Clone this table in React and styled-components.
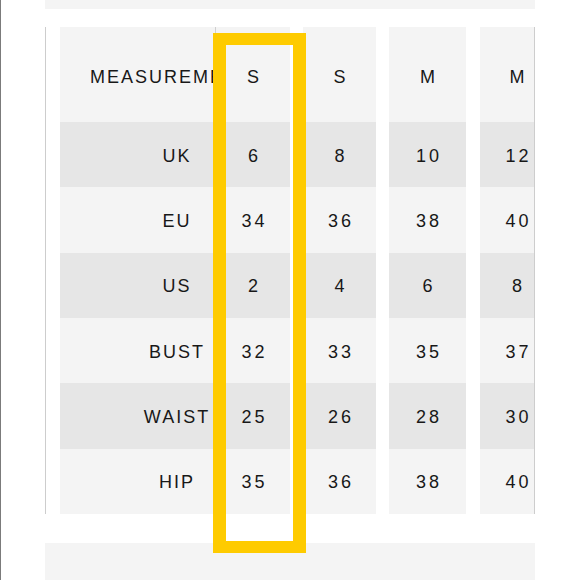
import React from "react";
import styled, { createGlobalStyle } from "styled-components";

const GlobalStyle = createGlobalStyle`
  html, body { margin: 0; padding: 0; background: #ffffff; }
  body { font-family: "Liberation Sans", Arial, Helvetica, sans-serif; }
`;

const Page = styled.div`
  position: relative;
  box-sizing: border-box;
  height: 580px;
  padding-left: 44px;
  border-left: 1px solid #7b7b7b;
  overflow: hidden;
`;

const Sheet = styled.div`
  width: 490px;
  display: flex;
  flex-direction: column;
`;

const Band = styled.div`
  height: ${(p) => p.$h}px;
  margin-top: ${(p) => p.$mt || 0}px;
  background: #f4f4f4;
  flex-shrink: 0;
`;

const TableFrame = styled.div`
  margin-top: 18px;
  box-sizing: border-box;
  height: 487px;
  padding-left: 14px;
  border-left: 1px solid #cdcdcd;
  border-right: 1px solid #cdcdcd;
  overflow: hidden;
  display: flex;
  flex-direction: column;
`;

const Row = styled.div`
  display: flex;
  flex-shrink: 0;
  height: ${(p) => (p.$header ? 95 : 65.33)}px;
  color: #181818;
  font-size: 18px;
  letter-spacing: 2px;
`;

const LabelCell = styled.div`
  box-sizing: border-box;
  flex: 0 0 156px;
  padding-top: ${(p) => (p.$header ? 6 : 3)}px;
  border-right: 1px solid #cfcfcf;
  background: ${(p) => p.$bg};
  display: flex;
  align-items: center;
  justify-content: flex-start;
  overflow: hidden;
  white-space: nowrap;
`;

const LabelText = styled.span`
  flex: 0 0 232px;
  padding-left: 2px;
  padding-right: ${(p) => (p.$header ? 12 : 0)}px;
  box-sizing: border-box;
  text-align: center;
`;

const SizeCell = styled.div`
  box-sizing: border-box;
  flex: 0 0 ${(p) => p.$w}px;
  margin-left: ${(p) => p.$gap}px;
  padding: ${(p) => (p.$header ? 6 : 3)}px 0 0 ${(p) => (p.$header ? 2 : 2.8)}px;
  letter-spacing: ${(p) => (p.$header ? 2 : 2.8)}px;
  background: ${(p) => p.$bg};
  display: flex;
  align-items: center;
  justify-content: center;
  white-space: nowrap;
`;

const Highlight = styled.div`
  position: absolute;
  left: 212px;
  top: 33px;
  width: 93px;
  height: 520px;
  box-sizing: border-box;
  border: 12px solid #fecb00;
  border-left-width: 13px;
  border-right-width: 13px;
  pointer-events: none;
`;

const columns = [
  { w: 74, gap: 0 },
  { w: 73, gap: 13 },
  { w: 77, gap: 13 },
  { w: 74, gap: 14 },
];

const rows = [
  { label: "MEASUREMENT", values: ["S", "S", "M", "M"], header: true },
  { label: "UK", values: ["6", "8", "10", "12"] },
  { label: "EU", values: ["34", "36", "38", "40"] },
  { label: "US", values: ["2", "4", "6", "8"] },
  { label: "BUST", values: ["32", "33", "35", "37"] },
  { label: "WAIST", values: ["25", "26", "28", "30"] },
  { label: "HIP", values: ["35", "36", "38", "40"] },
];

export default function App() {
  return (
    <>
      <GlobalStyle />
      <Page>
        <Sheet>
          <Band $h={9} />
          <TableFrame>
            {rows.map((r, i) => {
              const bg = i % 2 === 1 ? "#e6e6e6" : "#f4f4f4";
              return (
                <Row key={r.label} $header={r.header}>
                  <LabelCell $bg={bg} $header={r.header}>
                    <LabelText $header={r.header}>{r.label}</LabelText>
                  </LabelCell>
                  {r.values.map((v, j) => (
                    <SizeCell
                      key={j}
                      $w={columns[j].w}
                      $gap={columns[j].gap}
                      $bg={bg}
                      $header={r.header}
                    >
                      {v}
                    </SizeCell>
                  ))}
                </Row>
              );
            })}
          </TableFrame>
          <Band $h={40} $mt={29} />
        </Sheet>
        <Highlight />
      </Page>
    </>
  );
}
